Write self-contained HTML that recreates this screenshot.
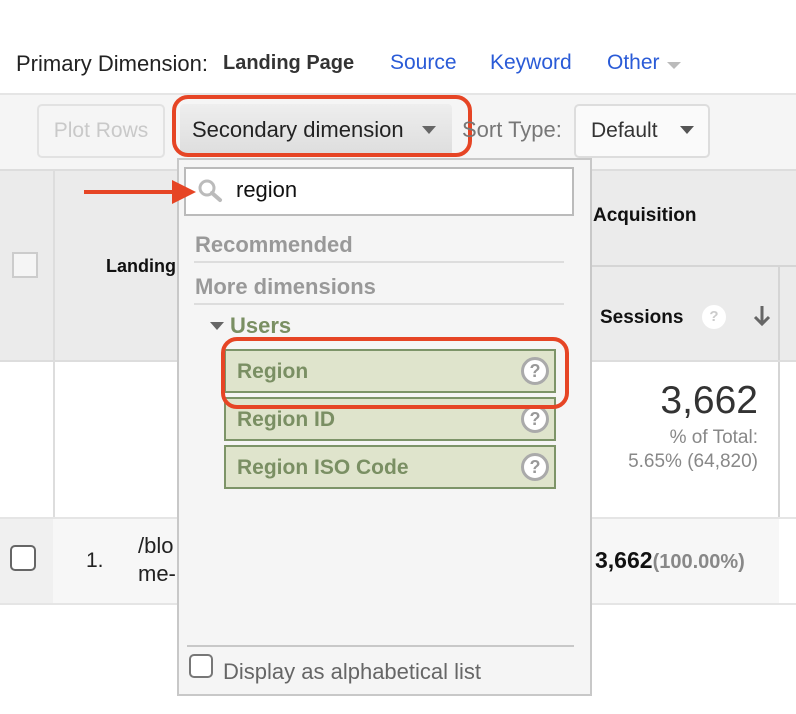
<!DOCTYPE html>
<html><head><style>
*{box-sizing:border-box;margin:0;padding:0}
body{width:796px;height:714px;background:#fff;font-family:"Liberation Sans",Arial,sans-serif;position:relative;overflow:hidden;color:#222}
.a{position:absolute}
.qm{position:absolute;width:28px;height:28px;border-radius:50%;border:3px solid #aaa;background:#fff;color:#999;font-weight:bold;font-size:18px;text-align:center;line-height:22px}
.item{position:absolute;left:224px;width:332px;height:44px;background:#dfe4cc;border:2px solid #7d9468;color:#7a8f63;font-weight:bold;font-size:21px;padding-left:11px;line-height:42px}
</style></head><body>
<div class="a" style="left:16px;top:51px;font-size:22px;color:#222">Primary Dimension:</div>
<div class="a" style="left:223px;top:52px;font-size:20px;font-weight:bold;color:#333">Landing Page</div>
<div class="a" style="left:390px;top:51px;font-size:21px;color:#2a5bd7">Source</div>
<div class="a" style="left:490px;top:51px;font-size:21px;color:#2a5bd7">Keyword</div>
<div class="a" style="left:607px;top:51px;font-size:21px;color:#2a5bd7">Other</div>
<div class="a" style="left:667px;top:62px;border-left:7px solid transparent;border-right:7px solid transparent;border-top:7px solid #bbb"></div>
<!-- toolbar -->
<div class="a" style="left:0;top:93px;width:796px;height:76px;background:#f5f5f5;border-top:2px solid #e5e5e5"></div>
<div class="a" style="left:37px;top:104px;width:128px;height:54px;border:2px solid #e2e2e2;border-radius:5px;color:#c9c9c9;font-size:21px;text-align:center;line-height:50px">Plot Rows</div>
<div class="a" style="left:180px;top:104px;width:272px;height:52px;background:linear-gradient(#eee,#ddd);border-radius:4px;font-size:22px;padding-left:12px;line-height:52px;color:#222">Secondary dimension</div>
<div class="a" style="left:422px;top:126px;border-left:7px solid transparent;border-right:7px solid transparent;border-top:8px solid #666"></div>
<div class="a" style="left:172px;top:95px;width:300px;height:62px;border:4px solid #e64525;border-radius:16px"></div>
<div class="a" style="left:462px;top:117px;font-size:22px;color:#777">Sort Type:</div>
<div class="a" style="left:574px;top:104px;width:136px;height:54px;background:#fafafa;border:2px solid #ddd;border-radius:5px;font-size:21px;padding-left:15px;line-height:50px;color:#333">Default</div>
<div class="a" style="left:680px;top:126px;border-left:7px solid transparent;border-right:7px solid transparent;border-top:8px solid #555"></div>
<!-- table -->
<div class="a" style="left:0;top:169px;width:796px;height:191px;background:#ebebeb;border-top:2px solid #ddd"></div>
<div class="a" style="left:53px;top:169px;width:2px;height:436px;background:#ddd"></div>
<div class="a" style="left:591px;top:265px;width:205px;height:2px;background:#d5d5d5"></div>
<div class="a" style="left:778px;top:267px;width:2px;height:338px;background:#d5d5d5"></div>
<div class="a" style="left:12px;top:252px;width:26px;height:26px;border:2px solid #ccc;background:#f5f5f5"></div>
<div class="a" style="left:106px;top:256px;font-size:18px;font-weight:bold;color:#111">Landing</div>
<div class="a" style="left:593px;top:205px;font-size:19px;font-weight:bold;color:#111">Acquisition</div>
<div class="a" style="left:600px;top:307px;font-size:19px;font-weight:bold;color:#111">Sessions</div>
<div class="a" style="left:702px;top:305px;width:24px;height:24px;border-radius:50%;background:#fff;color:#ccc;font-weight:bold;font-size:15px;text-align:center;line-height:24px">?</div>
<svg class="a" style="left:752px;top:304px" width="20" height="24"><line x1="10" y1="2" x2="10" y2="20" stroke="#666" stroke-width="3"/><polyline points="3,13 10,20 17,13" fill="none" stroke="#666" stroke-width="3"/></svg>
<div class="a" style="left:0;top:360px;width:796px;height:2px;background:#ddd"></div>
<div class="a" style="right:38px;top:379px;font-size:39px;color:#333">3,662</div>
<div class="a" style="right:38px;top:426px;font-size:19px;color:#888;text-align:right;line-height:24px">% of Total:<br>5.65% (64,820)</div>
<div class="a" style="left:0;top:517px;width:796px;height:88px;background:#f7f7f7;border-top:2px solid #e5e5e5;border-bottom:2px solid #e5e5e5"></div>
<div class="a" style="left:0;top:519px;width:53px;height:84px;background:#f0f0f0"></div>
<div class="a" style="left:779px;top:519px;width:17px;height:84px;background:#fff"></div>
<div class="a" style="left:10px;top:545px;width:26px;height:26px;border:2px solid #666;border-radius:5px;background:#fff"></div>
<div class="a" style="left:86px;top:549px;font-size:21px;color:#222">1.</div>
<div class="a" style="left:138px;top:532px;font-size:22px;color:#222;line-height:28px">/blo<br>me-</div>
<div class="a" style="left:595px;top:547px;font-size:23px;font-weight:bold;color:#111">3,662<span style="font-weight:bold;color:#888;font-size:20px">(100.00%)</span></div>
<!-- dropdown -->
<div class="a" style="left:177px;top:158px;width:415px;height:538px;background:#f5f5f5;border:2px solid #c8c8c8"></div>
<div class="a" style="left:184px;top:167px;width:390px;height:49px;background:#fff;border:2px solid #bbb"></div>
<svg class="a" style="left:196px;top:178px" width="32" height="30"><circle cx="11" cy="10" r="7" fill="none" stroke="#bbb" stroke-width="3"/><line x1="16" y1="15" x2="24" y2="22" stroke="#bbb" stroke-width="4" stroke-linecap="round"/></svg>
<div class="a" style="left:236px;top:177px;font-size:22px;color:#111">region</div>
<div class="a" style="left:84px;top:190px;width:100px;height:4px;background:#e64525"></div>
<div class="a" style="left:172px;top:180px;border-top:12px solid transparent;border-bottom:12px solid transparent;border-left:24px solid #e64525"></div>
<div class="a" style="left:195px;top:232px;font-size:22px;font-weight:bold;color:#999">Recommended</div>
<div class="a" style="left:194px;top:261px;width:370px;height:2px;background:#ddd"></div>
<div class="a" style="left:195px;top:274px;font-size:22px;font-weight:bold;color:#999">More dimensions</div>
<div class="a" style="left:194px;top:303px;width:370px;height:2px;background:#ddd"></div>
<div class="a" style="left:210px;top:322px;border-left:7px solid transparent;border-right:7px solid transparent;border-top:8px solid #666"></div>
<div class="a" style="left:230px;top:313px;font-size:22px;font-weight:bold;color:#7a8f63">Users</div>
<div class="item" style="top:349px">Region</div>
<div class="item" style="top:397px">Region ID</div>
<div class="item" style="top:445px">Region ISO Code</div>
<div class="qm" style="left:521px;top:357px">?</div>
<div class="qm" style="left:521px;top:405px">?</div>
<div class="qm" style="left:521px;top:453px">?</div>
<div class="a" style="left:221px;top:337px;width:348px;height:72px;border:4px solid #e64525;border-radius:16px"></div>
<div class="a" style="left:187px;top:645px;width:387px;height:2px;background:#c8c8c8"></div>
<div class="a" style="left:189px;top:654px;width:24px;height:24px;border:2px solid #777;border-radius:5px;background:#fff"></div>
<div class="a" style="left:223px;top:659px;font-size:22px;color:#666">Display as alphabetical list</div>
</body></html>
